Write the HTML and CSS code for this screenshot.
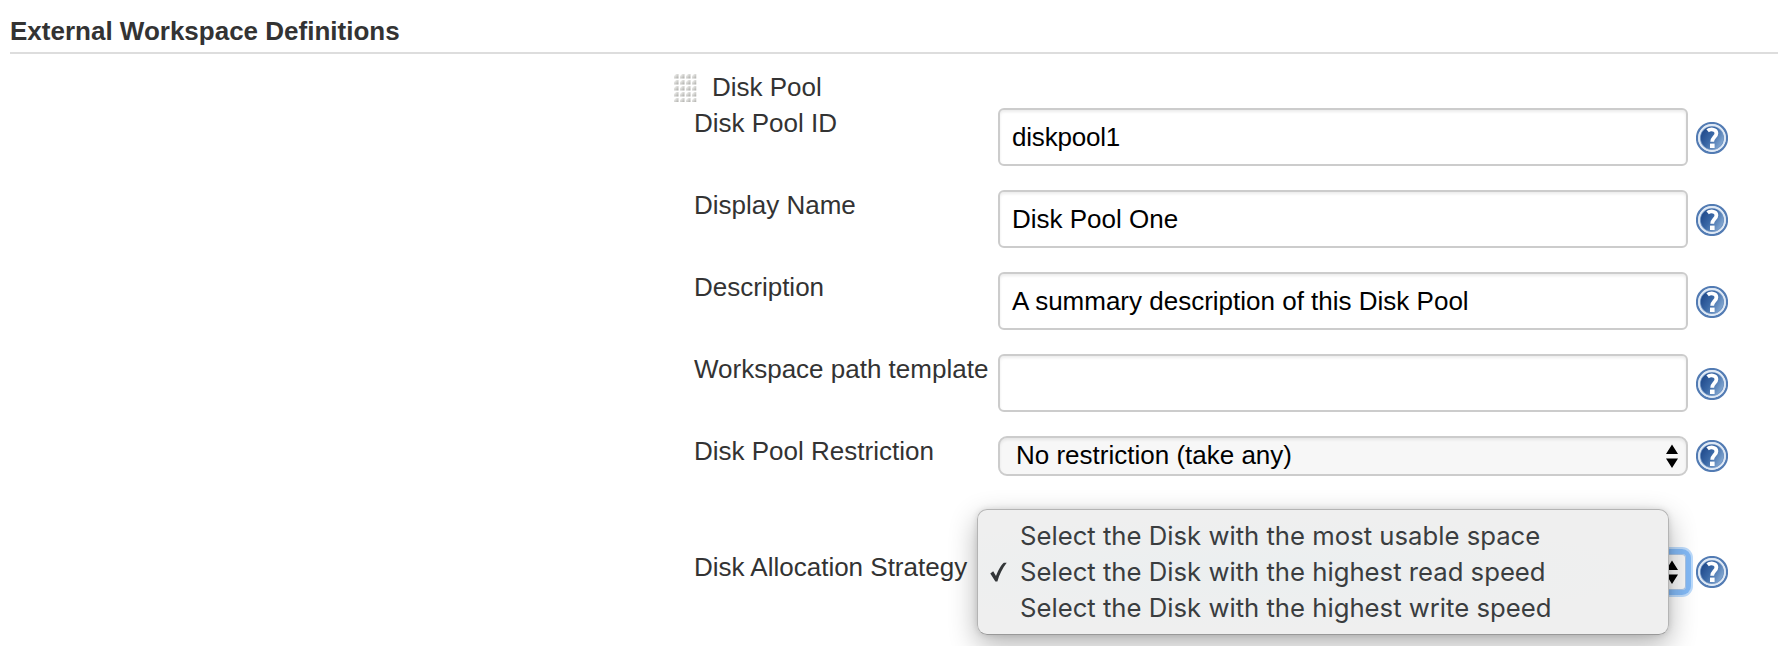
FILE: index.html
```
<!DOCTYPE html>
<html lang="en">
<head>
<meta charset="utf-8">
<title>External Workspace Definitions</title>
<link rel="stylesheet" href="styles.css">
</head>
<body>
<svg class="defs" width="0" height="0" aria-hidden="true">
  <defs>
    <linearGradient id="disc" x1="0" y1="0.2" x2="1" y2="0.8">
      <stop offset="0" stop-color="#1c4587"/>
      <stop offset="0.45" stop-color="#3a68a6"/>
      <stop offset="1" stop-color="#8fb2d8"/>
    </linearGradient>
    <linearGradient id="dot" x1="0" y1="0" x2="1" y2="1">
      <stop offset="0.1" stop-color="#f6f6f4"/>
      <stop offset="1" stop-color="#a8a8a4"/>
    </linearGradient>
    <pattern id="dots" width="6" height="6" patternUnits="userSpaceOnUse">
      <path d="M4.500 0V4.500H0V2L2 0Z" fill="url(#dot)"/>
    </pattern>
    <symbol id="help" viewBox="0 0 32 32">
      <circle cx="16" cy="16" r="15" fill="#dce6f2" stroke="#527bb3" stroke-width="2.200"/>
      <circle cx="16" cy="16" r="11.800" fill="url(#disc)" stroke="#6f93c2" stroke-width="1.200"/>
      <circle cx="16" cy="16" r="13" fill="none" stroke="#dfe9f5" stroke-width="1.800"/>
      <path d="M11.600 8.800C14 6.800 20.400 6.600 20.400 11.200C20.400 15 16.200 15.200 16.200 19.800" fill="none" stroke="#fff" stroke-width="3.800"/>
      <rect x="14" y="21.600" width="4.600" height="4.400" fill="#fff"/>
    </symbol>
    <symbol id="updown" viewBox="0 0 12 24">
      <path d="M0 10L6 0.500L12 10ZM0 14.500H12L6 24Z" fill="#000"/>
    </symbol>
  </defs>
</svg>
<main class="page">
  <h1 class="heading">External Workspace Definitions</h1>
  <form class="pool">
    <div class="pool-title">
      <svg class="handle" width="23" height="28"><rect width="22.500" height="28.500" fill="url(#dots)"/></svg>
      <span>Disk Pool</span>
    </div>
    <div class="row text-row">
      <label class="label">Disk Pool ID</label>
      <div class="input"><span class="pool-id">diskpool1</span></div>
      <svg class="help"><use href="#help"/></svg>
    </div>
    <div class="row text-row">
      <label class="label">Display Name</label>
      <div class="input"><span>Disk Pool One</span></div>
      <svg class="help"><use href="#help"/></svg>
    </div>
    <div class="row text-row">
      <label class="label">Description</label>
      <div class="input"><span>A summary description of this Disk Pool</span></div>
      <svg class="help"><use href="#help"/></svg>
    </div>
    <div class="row text-row">
      <label class="label">Workspace path template</label>
      <div class="input"></div>
      <svg class="help"><use href="#help"/></svg>
    </div>
    <div class="row restriction">
      <label class="label">Disk Pool Restriction</label>
      <div class="select"><span>No restriction (take any)</span><svg class="updown"><use href="#updown"/></svg></div>
      <svg class="help"><use href="#help"/></svg>
    </div>
    <div class="row">
      <label class="label">Disk Allocation Strategy</label>
      <div class="select focused"><svg class="updown"><use href="#updown"/></svg>
        <ul class="menu">
          <li class="option">Select the Disk with the most usable space</li>
          <li class="option"><svg class="check" viewBox="0 0 17 20"><path d="M0.300 11.500L3.200 9.200L6 14C8 8.500 11 3 13.800 0.700H16.700C12.500 6 9.200 13 7.400 19.500H5.400Z" fill="#333638"/></svg>Select the Disk with the highest read speed</li>
          <li class="option">Select the Disk with the highest write speed</li>
        </ul>
      </div>
      <svg class="help"><use href="#help"/></svg>
    </div>
  </form>
</main>
</body>
</html>
```
FILE: styles.css
```
* { box-sizing: border-box; }
body {
  margin: 0;
  background: #fff;
  color: #333;
  font: 26px/30px "Liberation Sans", Arial, sans-serif;
  overflow: hidden;
}
.defs { display: block; height: 0; }
.page { height: 646px; overflow: hidden; padding: 16px 0 0 10px; }
.heading {
  margin: 0;
  height: 38px;
  border-bottom: 2px solid #ddd;
  font-size: 26px;
  line-height: 30px;
  white-space: nowrap;
}
.pool { padding: 18px 50px 0 664px; }
.pool-title { display: flex; height: 36px; gap: 15px; }
.handle { display: block; margin-top: 2px; }
.row {
  display: grid;
  grid-template-columns: 304px 690px 32px;
  align-items: center;
  padding-left: 20px;
  margin-bottom: 24px;
}
.restriction { margin-bottom: 76px; }
.label { align-self: start; white-space: nowrap; }
.help { display: block; width: 32px; height: 32px; margin-left: 8px; }
.text-row .help { margin-top: 2px; }
.input, .select {
  border: 2px solid #ccc;
  color: #000;
  display: flex;
  align-items: center;
  white-space: nowrap;
}
.input {
  height: 58px;
  padding: 0 12px;
  border-radius: 6px;
  box-shadow: inset 0 2px 3px rgba(0, 0, 0, .08);
}
.pool-id { letter-spacing: -0.2px; }
.select {
  position: relative;
  height: 40px;
  padding: 0 8px 0 16px;
  border-radius: 9px;
  background: #f7f7f7;
  box-shadow: inset 0 2px 3px rgba(0, 0, 0, .07);
}
.select > span { margin-top: -2px; }
.updown { width: 12px; height: 24px; margin-left: auto; }
.focused {
  border-color: #83b9f5;
  border-radius: 6px;
  box-shadow: inset 0 0 0 1px #a9c4e4, 0 0 0 3px #83b9f5, 0 0 0 5px #bddbfb;
}
.menu {
  position: absolute;
  left: -23px;
  top: -45px;
  width: 692px;
  height: 126px;
  margin: 0;
  padding: 8px 0;
  list-style: none;
  border: 1px solid #b4b4b4;
  border-bottom-color: #999;
  border-radius: 10px;
  background: radial-gradient(ellipse at 40% 50%, #ebeff0, #efefef 65%);
  box-shadow: 0 10px 28px rgba(0, 0, 0, .3), 0 0 6px rgba(0, 0, 0, .12);
  color: #3a3d3f;
  font: 25.7px/36px Inter, sans-serif;
}
.option { position: relative; height: 36px; padding-left: 42px; }
.check { position: absolute; left: 12px; top: 8px; width: 17px; height: 20px; }
```
